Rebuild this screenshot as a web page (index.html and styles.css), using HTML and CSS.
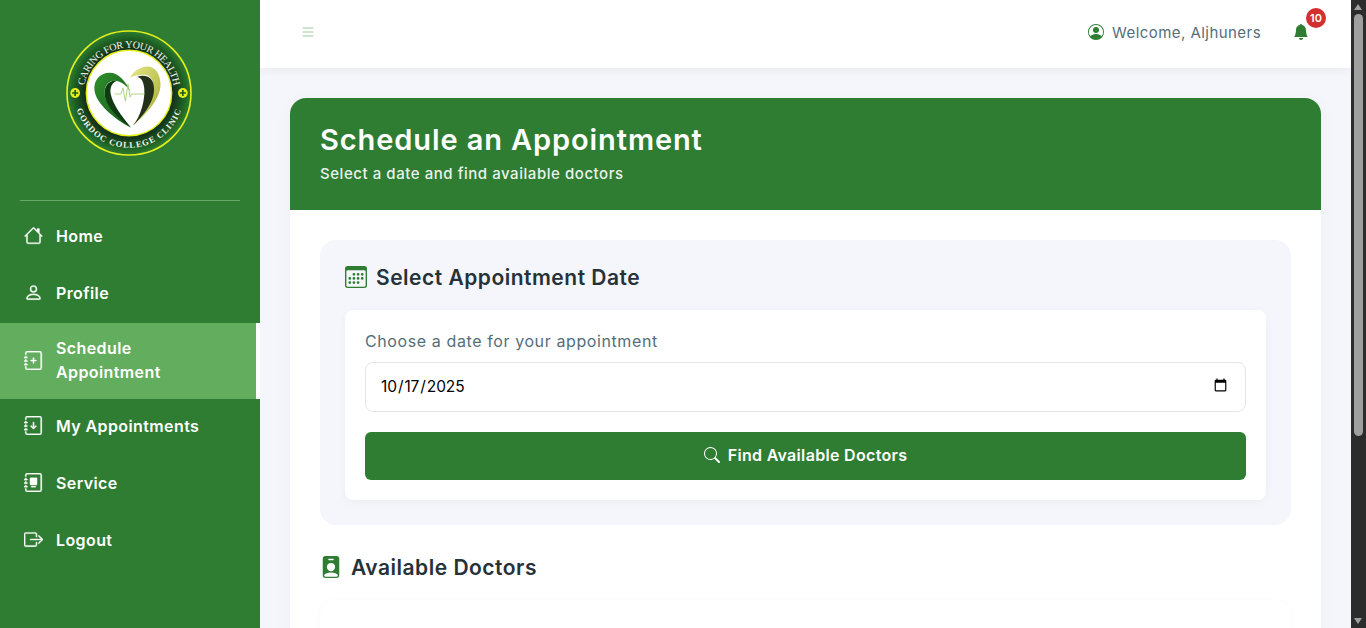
FILE: index.html
```html
<!DOCTYPE html>
<html lang="en">
<head>
	<meta charset="UTF-8">
	<title>Schedule Appointment</title>
	<link rel="stylesheet" href="styles.css">
</head>
<body>

<aside class="sidebar">
	<div class="logo-wrap">
		<svg class="logo" viewBox="0 0 124 124">
			<defs>
				<radialGradient id="band" cx="50%" cy="50%" r="50%">
					<stop offset="68%" stop-color="#12281a"/>
					<stop offset="88%" stop-color="#1d5f22"/>
					<stop offset="100%" stop-color="#2e7d32"/>
				</radialGradient>
				<linearGradient id="lobeL" x1="0" y1="0" x2="1" y2="1">
					<stop offset="0%" stop-color="#2f8f2c"/>
					<stop offset="100%" stop-color="#15591a"/>
				</linearGradient>
				<linearGradient id="lobeR" x1="0" y1="0" x2="1" y2="1">
					<stop offset="0%" stop-color="#e6e88a"/>
					<stop offset="100%" stop-color="#a4a92a"/>
				</linearGradient>
				<path id="arcTop" d="M 17.500 62 A 44.500 44.500 0 0 1 106.500 62"/>
				<path id="arcBottom" d="M 8 62 A 54 54 0 0 0 116 62"/>
			</defs>
			<circle cx="62" cy="62" r="61" fill="url(#band)" stroke="#e4f01c" stroke-width="1.600"/>
			<circle cx="62" cy="62" r="42" fill="#fff" stroke="#e4f01c" stroke-width="1.400"/>
			<text class="logo-top"><textPath href="#arcTop" startOffset="50%" text-anchor="middle">CARING FOR YOUR HEALTH</textPath></text>
			<text class="logo-bottom"><textPath href="#arcBottom" startOffset="50%" text-anchor="middle">GORDOC COLLEGE CLINIC</textPath></text>
			<circle cx="9" cy="62" r="4.800" fill="#e4f01c"/>
			<circle cx="115" cy="62" r="4.800" fill="#e4f01c"/>
			<path d="M6 62h6M9 59v6M112 62h6M115 59v6" stroke="#1c5a1e" stroke-width="1.600"/>
			<path d="M64 61C58 50 52 42 43 42C33 42 27 50 28 59C29 72 48 88 64 96C52 84 38 74 38 62C38 54 42 50 48 50C54 50 60 55 64 61Z" fill="url(#lobeL)"/>
			<path d="M64 96C50 86 38 74 38 62C38 54 43 49 50 50C45 52 43 57 44 63C46 73 54 84 64 96Z" fill="#0f3a12"/>
			<path d="M62.700 47C67 40 74 36 80 36C88 36 93 44 93 54C93 68 78 84 66 94C74 82 86 70 86 56C86 48 82 44 77 44C71 44 66 45 62.700 47Z" fill="url(#lobeR)"/>
			<path d="M66 94C74 84 78 68 77 57C76 50 74 47 70 46C80 43 86 48 86.500 56C88 70 76 84 66 94Z" fill="#23301a"/>
			<path d="M48 63h6l2-6 2.500 13 2.500-17 2 13 1.500-3h13" fill="none" stroke="#9ccb63" stroke-width=".8"/>
		</svg>
	</div>
	<nav class="nav">
		<a class="nav-item">
			<svg class="nav-icon" viewBox="0 0 16 16" fill="currentColor"><path d="M8.707 1.5a1 1 0 0 0-1.414 0L.646 8.146a.5.5 0 0 0 .708.708L2 8.207V13.500A1.500 1.500 0 0 0 3.500 15h9a1.500 1.500 0 0 0 1.500-1.500V8.207l.646.647a.5.5 0 0 0 .708-.708L13 5.793V2.500a.5.5 0 0 0-.5-.5h-1a.5.5 0 0 0-.5.5v1.293zM13 7.207V13.500a.5.5 0 0 1-.5.5h-9a.5.5 0 0 1-.5-.5V7.207l5-5z"/></svg>
			<span>Home</span>
		</a>
		<a class="nav-item">
			<svg class="nav-icon" viewBox="0 0 16 16" fill="currentColor"><path d="M8 8a3 3 0 1 0 0-6 3 3 0 0 0 0 6m2-3a2 2 0 1 1-4 0 2 2 0 0 1 4 0m4 8c0 1-1 1-1 1H3s-1 0-1-1 1-4 6-4 6 3 6 4m-1-.004c-.001-.246-.154-.986-.832-1.664C11.516 10.680 10.289 10 8 10s-3.516.68-4.168 1.332c-.678.678-.83 1.418-.832 1.664z"/></svg>
			<span>Profile</span>
		</a>
		<a class="nav-item active">
			<svg class="nav-icon" viewBox="0 0 16 16" fill="currentColor"><path d="M8 5.500a.5.5 0 0 1 .5.5v1.500H10a.5.5 0 0 1 0 1H8.500V10a.5.5 0 0 1-1 0V8.500H6a.5.5 0 0 1 0-1h1.500V6a.5.5 0 0 1 .5-.5"/><path d="M3 0h10a2 2 0 0 1 2 2v12a2 2 0 0 1-2 2H3a2 2 0 0 1-2-2v-1h1v1a1 1 0 0 0 1 1h10a1 1 0 0 0 1-1V2a1 1 0 0 0-1-1H3a1 1 0 0 0-1 1v1H1V2a2 2 0 0 1 2-2"/><path d="M1 5v-.5a.5.5 0 0 1 1 0V5h.5a.5.5 0 0 1 0 1h-2a.5.5 0 0 1 0-1zm0 3v-.5a.5.5 0 0 1 1 0V8h.5a.5.5 0 0 1 0 1h-2a.5.5 0 0 1 0-1zm0 3v-.5a.5.5 0 0 1 1 0v.5h.5a.5.5 0 0 1 0 1h-2a.5.5 0 0 1 0-1z"/></svg>
			<span>Schedule<br>Appointment</span>
		</a>
		<a class="nav-item">
			<svg class="nav-icon" viewBox="0 0 16 16" fill="currentColor"><path d="M8 5a.5.5 0 0 1 .5.5v3.793l1.146-1.147a.5.5 0 0 1 .708.708l-2 2a.5.5 0 0 1-.708 0l-2-2a.5.5 0 1 1 .708-.708L7.500 9.293V5.500A.5.5 0 0 1 8 5"/><path d="M3 0h10a2 2 0 0 1 2 2v12a2 2 0 0 1-2 2H3a2 2 0 0 1-2-2v-1h1v1a1 1 0 0 0 1 1h10a1 1 0 0 0 1-1V2a1 1 0 0 0-1-1H3a1 1 0 0 0-1 1v1H1V2a2 2 0 0 1 2-2"/><path d="M1 5v-.5a.5.5 0 0 1 1 0V5h.5a.5.5 0 0 1 0 1h-2a.5.5 0 0 1 0-1zm0 3v-.5a.5.5 0 0 1 1 0V8h.5a.5.5 0 0 1 0 1h-2a.5.5 0 0 1 0-1zm0 3v-.5a.5.5 0 0 1 1 0v.5h.5a.5.5 0 0 1 0 1h-2a.5.5 0 0 1 0-1z"/></svg>
			<span>My Appointments</span>
		</a>
		<a class="nav-item">
			<svg class="nav-icon" viewBox="0 0 16 16" fill="currentColor"><path d="M5.500 4a.5.5 0 0 0-.5.5v5a.5.5 0 0 0 .5.5h5a.5.5 0 0 0 .5-.5v-5a.5.5 0 0 0-.5-.5zm1 7a.5.5 0 0 0 0 1h3a.5.5 0 0 0 0-1z"/><path d="M3 0h10a2 2 0 0 1 2 2v12a2 2 0 0 1-2 2H3a2 2 0 0 1-2-2v-1h1v1a1 1 0 0 0 1 1h10a1 1 0 0 0 1-1V2a1 1 0 0 0-1-1H3a1 1 0 0 0-1 1v1H1V2a2 2 0 0 1 2-2"/><path d="M1 5v-.5a.5.5 0 0 1 1 0V5h.5a.5.5 0 0 1 0 1h-2a.5.5 0 0 1 0-1zm0 3v-.5a.5.5 0 0 1 1 0V8h.5a.5.5 0 0 1 0 1h-2a.5.5 0 0 1 0-1zm0 3v-.5a.5.5 0 0 1 1 0v.5h.5a.5.5 0 0 1 0 1h-2a.5.5 0 0 1 0-1z"/></svg>
			<span>Service</span>
		</a>
		<a class="nav-item">
			<svg class="nav-icon" viewBox="0 0 16 16" fill="currentColor"><path d="M10 12.500a.5.5 0 0 1-.5.5h-8a.5.5 0 0 1-.5-.5v-9a.5.5 0 0 1 .5-.5h8a.5.5 0 0 1 .5.5v2a.5.5 0 0 0 1 0v-2A1.500 1.500 0 0 0 9.500 2h-8A1.500 1.500 0 0 0 0 3.500v9A1.500 1.500 0 0 0 1.500 14h8a1.500 1.500 0 0 0 1.500-1.500v-2a.5.5 0 0 0-1 0z"/><path d="M15.854 8.354a.5.5 0 0 0 0-.708l-3-3a.5.5 0 0 0-.708.708L14.293 7.500H5.500a.5.5 0 0 0 0 1h8.793l-2.147 2.146a.5.5 0 0 0 .708.708z"/></svg>
			<span>Logout</span>
		</a>
	</nav>
</aside>

<div class="page">
	<header class="topbar">
		<svg class="menu-icon" viewBox="0 0 16 16" fill="currentColor"><path d="M2.500 12a.5.5 0 0 1 .5-.5h10a.5.5 0 0 1 0 1H3a.5.5 0 0 1-.5-.5m0-4a.5.5 0 0 1 .5-.5h10a.5.5 0 0 1 0 1H3a.5.5 0 0 1-.5-.5m0-4a.5.5 0 0 1 .5-.5h10a.5.5 0 0 1 0 1H3a.5.5 0 0 1-.5-.5"/></svg>
		<div class="welcome">
			<svg class="welcome-icon" viewBox="0 0 16 16" fill="currentColor"><path d="M11 6a3 3 0 1 1-6 0 3 3 0 0 1 6 0"/><path d="M0 8a8 8 0 1 1 16 0A8 8 0 0 1 0 8m8-7a7 7 0 0 0-5.468 11.370C3.242 11.226 4.805 10 8 10s4.757 1.225 5.468 2.370A7 7 0 0 0 8 1"/></svg>
			<span>Welcome, Aljhuners</span>
		</div>
		<div class="bell">
			<svg class="bell-icon" viewBox="0 0 16 16" fill="currentColor"><path d="M8 16a2 2 0 0 0 2-2H6a2 2 0 0 0 2 2m.995-14.901a1 1 0 1 0-1.990 0A5 5 0 0 0 3 6c0 1.098-.5 6-2 7h14c-1.500-1-2-5.902-2-7 0-2.420-1.720-4.440-4.005-4.901"/></svg>
			<span class="badge">10</span>
		</div>
	</header>

	<main class="content">
		<section class="card">
			<div class="card-head">
				<h1>Schedule an Appointment</h1>
				<p>Select a date and find available doctors</p>
			</div>
			<div class="card-body">
				<div class="date-panel">
					<h2 class="section-title">
						<svg class="title-icon" viewBox="0 0 16 16"><path fill="#2e7d32" d="M14 0H2a2 2 0 0 0-2 2v12a2 2 0 0 0 2 2h12a2 2 0 0 0 2-2V2a2 2 0 0 0-2-2M1 3.857C1 3.384 1.448 3 2 3h12c.552 0 1 .384 1 .857v10.286c0 .473-.448.857-1 .857H2c-.552 0-1-.384-1-.857z"/><path fill="#2e7d32" d="M6.500 7a1 1 0 1 0 0-2 1 1 0 0 0 0 2m3 0a1 1 0 1 0 0-2 1 1 0 0 0 0 2m3 0a1 1 0 1 0 0-2 1 1 0 0 0 0 2m-9 3a1 1 0 1 0 0-2 1 1 0 0 0 0 2m3 0a1 1 0 1 0 0-2 1 1 0 0 0 0 2m3 0a1 1 0 1 0 0-2 1 1 0 0 0 0 2m3 0a1 1 0 1 0 0-2 1 1 0 0 0 0 2m-9 3a1 1 0 1 0 0-2 1 1 0 0 0 0 2m3 0a1 1 0 1 0 0-2 1 1 0 0 0 0 2m3 0a1 1 0 1 0 0-2 1 1 0 0 0 0 2"/></svg>
						<span class="title-text">Select Appointment Date</span>
					</h2>
					<div class="date-box">
						<label class="date-label" for="date">Choose a date for your appointment</label>
						<input class="date-input" id="date" type="date" value="2025-10-17">
						<button class="find-btn">
							<svg class="find-icon" viewBox="0 0 16 16" fill="currentColor"><path d="M11.742 10.344a6.500 6.500 0 1 0-1.397 1.398h-.001q.044.060.098.115l3.850 3.850a1 1 0 0 0 1.415-1.414l-3.850-3.850a1 1 0 0 0-.115-.1zM12 6.500a5.500 5.500 0 1 1-11 0 5.500 5.500 0 0 1 11 0"/></svg>
							Find Available Doctors
						</button>
					</div>
				</div>
				<h2 class="section-title doctors-title">
					<svg class="title-icon" viewBox="0 0 16 16"><path fill="#2e7d32" d="M2 2a2 2 0 0 1 2-2h8a2 2 0 0 1 2 2v12a2 2 0 0 1-2 2H4a2 2 0 0 1-2-2zm4.500 0a.5.5 0 0 0 0 1h3a.5.5 0 0 0 0-1zM8 11a3 3 0 1 0 0-6 3 3 0 0 0 0 6m5 2.755C12.146 12.825 10.623 12 8 12s-4.146.826-5 1.755V14a1 1 0 0 0 1 1h8a1 1 0 0 0 1-1z"/></svg>
					<span class="title-text">Available Doctors</span>
				</h2>
				<div class="doctor-list"></div>
			</div>
		</section>
	</main>
</div>

<div class="scrollbar">
	<span class="arrow-up"></span>
	<span class="thumb"></span>
	<span class="arrow-down"></span>
</div>

</body>
</html>
```

FILE: styles.css
```css
* {
	box-sizing: border-box;
}
html,
body {
	height: 100%;
}
body {
	margin: 0;
	display: flex;
	overflow: hidden;
	background-color: #f4f6fb;
	font-family: Inter, "Noto Sans", sans-serif;
}
h1,
h2,
p {
	margin: 0;
}

/* sidebar */
.sidebar {
	width: 260px;
	flex-shrink: 0;
	background-color: #2e7d32;
	color: #fff;
}
.logo-wrap {
	height: 201px;
	margin: 0 20px;
	padding-top: 30px;
	display: flex;
	justify-content: center;
	align-items: flex-start;
	border-bottom: 1px solid #66a96a;
}
.logo {
	width: 126px;
	height: 126px;
	margin-right: 3px;
}
.logo-top {
	font-family: "Liberation Serif", serif;
	font-size: 10px;
	letter-spacing: -.35px;
	fill: #f1f5ea;
}
.logo-bottom {
	font-family: "Liberation Serif", serif;
	font-size: 8.500px;
	font-weight: bold;
	letter-spacing: 1px;
	fill: #f1f5ea;
}
.nav {
	padding-top: 8px;
}
.nav-item {
	display: flex;
	align-items: center;
	gap: 13px;
	min-height: 57px;
	padding: 12px 24px 16px;
	font-size: 16px;
	font-weight: 600;
	line-height: 24px;
	letter-spacing: .4px;
}
.nav-item.active {
	min-height: 76px;
	padding: 13px 24px 15px;
	background-color: #62ad5e;
	border-right: 4px solid #fff;
}
.nav-icon {
	width: 19px;
	height: 19px;
	flex-shrink: 0;
	stroke: currentColor;
	stroke-width: .3;
}

/* top bar */
.page {
	flex: 1;
	min-width: 0;
	height: 100%;
	overflow: hidden;
}
.topbar {
	height: 68px;
	padding: 0 42px 4px 40px;
	display: flex;
	align-items: center;
	background-color: #fff;
	box-shadow: 0 2px 10px rgba(0, 0, 0, .05);
	position: relative;
}
.menu-icon {
	width: 16px;
	height: 16px;
	color: #9ccb9e;
}
.welcome {
	margin-left: auto;
	display: flex;
	align-items: center;
	gap: 8px;
	font-size: 15px;
	letter-spacing: .45px;
	color: #546e7a;
}
.welcome-icon {
	width: 16px;
	height: 16px;
	color: #2e7d32;
}
.bell {
	margin-left: 32px;
	position: relative;
	display: flex;
}
.bell-icon {
	width: 16px;
	height: 16px;
	color: #2e7d32;
}
.badge {
	position: absolute;
	top: -16px;
	left: 13px;
	width: 20px;
	height: 20px;
	border-radius: 50%;
	background-color: #d32f2f;
	color: #fff;
	font-size: 11px;
	font-weight: 600;
	line-height: 20px;
	text-align: center;
}

/* main card */
.content {
	padding: 30px;
}
.card {
	background-color: #fff;
	border-radius: 16px;
	overflow: hidden;
	box-shadow: 0 4px 20px rgba(0, 0, 0, .03);
}
.card-head {
	height: 112px;
	padding: 24px 30px 0;
	background-color: #2e7d32;
	color: #fff;
}
.card-head h1 {
	font-size: 29px;
	font-weight: 600;
	line-height: 36px;
	letter-spacing: .9px;
}
.card-head p {
	margin-top: 5px;
	font-size: 15px;
	font-weight: 500;
	line-height: 22px;
	letter-spacing: .55px;
	opacity: .9;
}
.card-body {
	padding: 30px;
}
.date-panel {
	padding: 25px;
	background-color: #f4f6fb;
	border-radius: 16px;
}
.section-title {
	display: flex;
	align-items: center;
	gap: 9px;
	font-size: 21px;
	font-weight: 600;
	line-height: 24px;
	letter-spacing: .5px;
	color: #263238;
}
.title-text {
	padding-top: 1px;
	height: 24px;
}
.title-icon {
	width: 22px;
	height: 22px;
	flex-shrink: 0;
}
.date-box {
	margin-top: 21px;
	padding: 20px;
	background-color: #fff;
	border-radius: 8px;
	box-shadow: 0 2px 8px rgba(0, 0, 0, .04);
}
.date-label {
	display: block;
	height: 22px;
	font-size: 16px;
	line-height: 22px;
	letter-spacing: .6px;
	color: #546e7a;
}
.date-input {
	display: block;
	width: 100%;
	height: 50px;
	margin-top: 10px;
	padding: 0 15px 2px 14px;
	border: 1px solid #e4e6ec;
	border-radius: 8px;
	background-color: #fff;
	color: #000;
	font-family: inherit;
	font-size: 15.500px;
	letter-spacing: -.1px;
}
.find-btn {
	width: 100%;
	height: 48px;
	margin-top: 20px;
	padding-bottom: 4px;
	display: flex;
	justify-content: center;
	align-items: center;
	gap: 8px;
	border: none;
	border-radius: 6px;
	background-color: #2e7d32;
	color: #fff;
	font-family: inherit;
	font-size: 16px;
	font-weight: 600;
	letter-spacing: .32px;
}
.find-icon {
	width: 16px;
	height: 16px;
}
.doctors-title {
	margin-top: 30px;
}
.doctor-list {
	height: 120px;
	margin-top: 21px;
	background-color: #fff;
	border-radius: 16px;
	box-shadow: 0 2px 8px rgba(0, 0, 0, .03);
}

/* window scrollbar from the screenshot */
.scrollbar {
	width: 15px;
	flex-shrink: 0;
	padding: 4px 0 4px 3px;
	display: flex;
	flex-direction: column;
	background-color: #2c2c2c;
}
.thumb {
	width: 9px;
	height: 422px;
	margin-top: 4px;
	border-radius: 5px;
	background-color: #9f9f9f;
}
.arrow-up,
.arrow-down {
	width: 0;
	height: 0;
	border-left: 4.500px solid transparent;
	border-right: 4.500px solid transparent;
}
.arrow-up {
	border-bottom: 6px solid #9f9f9f;
}
.arrow-down {
	margin-top: auto;
	border-top: 6px solid #9f9f9f;
}
```
